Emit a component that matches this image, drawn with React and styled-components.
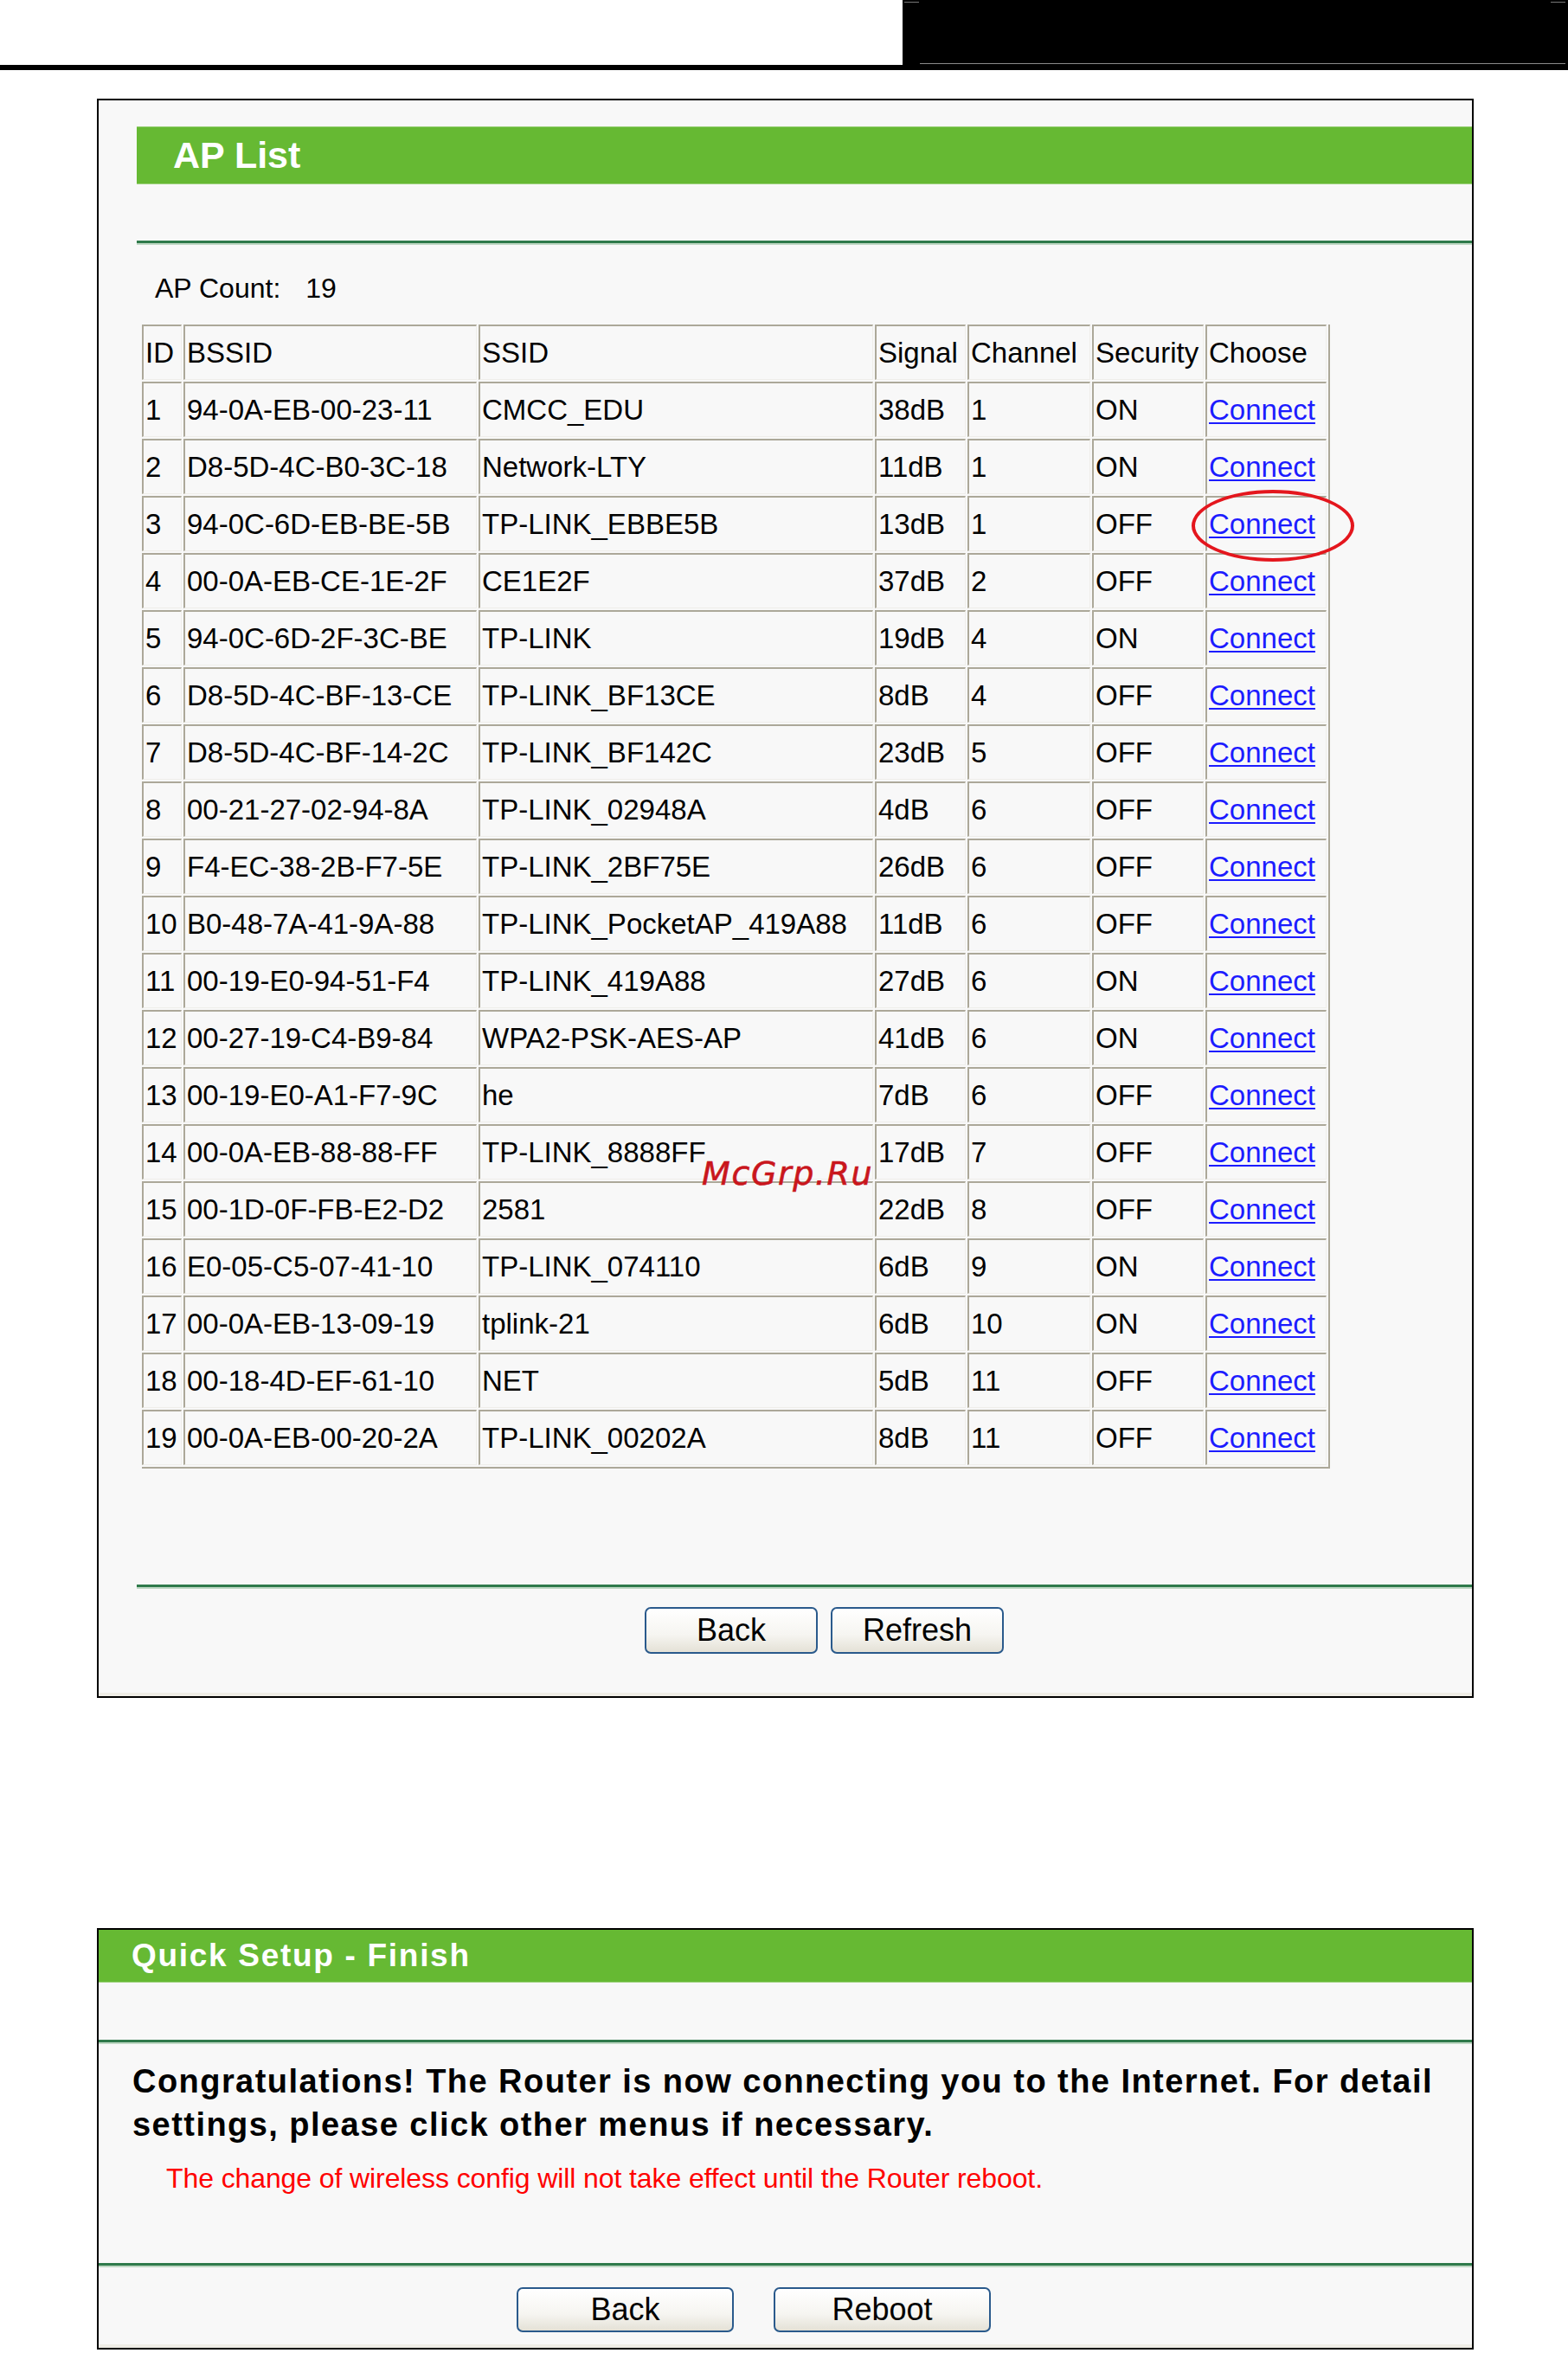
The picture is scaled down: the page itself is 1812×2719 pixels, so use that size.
import React from 'react';
import styled, { createGlobalStyle } from 'styled-components';

const GlobalStyle = createGlobalStyle`
  html, body { margin: 0; padding: 0; background: #ffffff; }
  body { font-family: "Liberation Sans", Arial, sans-serif; color: #000; }
`;

const Page = styled.div`
  width: 1812px;
  padding-bottom: 4px;
`;

const TopBar = styled.div`
  display: flex;
  height: 75px;
  border-bottom: 6px solid #000;
`;

const TopSpacer = styled.div`
  flex: 1;
`;

const TopBlock = styled.div`
  box-sizing: border-box;
  width: 769px;
  background: #000;
  display: flex;
  flex-direction: column;
  justify-content: space-between;
  padding: 2px 3px 1px 2px;
`;

const TopTicks = styled.div`
  display: flex;
  justify-content: space-between;
`;

const Tick = styled.span`
  width: 17px;
  height: 1px;
  background: #777;
`;

const TopRule = styled.div`
  height: 1px;
  margin-left: 18px;
  background: #8a8a8a;
`;

const Panel = styled.section`
  box-sizing: border-box;
  width: 1591px;
  margin: ${(p) => p.$top}px 0 0 112px;
  border: 2px solid #000;
  background: #f8f8f8;
  box-shadow: inset 0 -4px 0 #efede6;
  padding-bottom: ${(p) => p.$bottom}px;
`;

const Header = styled.div`
  box-sizing: border-box;
  height: ${(p) => p.$h}px;
  margin: ${(p) => p.$mt}px 0 0 ${(p) => p.$ml}px;
  padding-left: ${(p) => p.$pl}px;
  background: #66b933;
  border-top: ${(p) => (p.$topEdge ? '1px solid #9ed27e' : 'none')};
  border-bottom: 1px solid #9ed27e;
  display: flex;
  align-items: center;
  color: #ffffff;
  font-weight: bold;
  font-size: ${(p) => p.$fs}px;
  letter-spacing: ${(p) => p.$ls || 0}px;
`;

const Divider = styled.div`
  height: 0;
  margin: ${(p) => p.$mt}px 0 0 ${(p) => p.$ml || 0}px;
  border-top: 3px solid #2f7a4b;
  border-bottom: 2px solid #bfd8c4;
`;

const CountRow = styled.div`
  height: 40px;
  margin: 30px 0 0 65px;
  display: flex;
  align-items: center;
  gap: 29px;
  font-size: 32px;
`;

const Grid = styled.div`
  position: relative;
  width: fit-content;
  margin: 22px 0 0 50px;
  display: grid;
  grid-template-columns: 46px 339px 456px 105px 142px 129px 140px;
  grid-auto-rows: 64px;
  gap: 2px;
  padding: 0 2px 2px 0;
  border-right: 2px solid #aca899;
  border-bottom: 2px solid #aca899;
  font-size: 33px;
`;

const Row = styled.div`
  display: contents;
`;

const Cell = styled.div`
  box-sizing: border-box;
  display: flex;
  align-items: center;
  padding-left: 2px;
  border-top: 2px solid #aca899;
  border-left: 2px solid #aca899;
  border-right: 1px solid #efeeea;
  border-bottom: 1px solid #efeeea;
  white-space: nowrap;
  overflow: hidden;
`;

const ConnectLink = styled.a`
  color: #1c1cff;
  text-decoration: underline;
  text-decoration-thickness: 2px;
  text-underline-offset: 3px;
  cursor: pointer;
`;

const Highlight = styled.span`
  position: absolute;
  left: 1213px;
  top: 191px;
  width: 188px;
  height: 83px;
  box-sizing: border-box;
  border: 4px solid #e4161d;
  border-radius: 50%;
  pointer-events: none;
`;

const Watermark = styled.span`
  position: absolute;
  left: 647px;
  top: 962px;
  font-family: "DejaVu Sans", sans-serif;
  font-style: italic;
  font-size: 38px;
  line-height: 1;
  letter-spacing: 1.6px;
  color: #c9161d;
  -webkit-text-stroke: 0.6px #c9161d;
  pointer-events: none;
`;

const ButtonRow = styled.div`
  display: flex;
  gap: ${(p) => p.$gap}px;
  margin: ${(p) => p.$mt}px 0 0 ${(p) => p.$pl}px;
`;

const Button = styled.button`
  box-sizing: border-box;
  width: ${(p) => p.$w}px;
  height: ${(p) => p.$h}px;
  padding: 0;
  border: 2px solid #2a5a8c;
  border-radius: 7px;
  background: linear-gradient(#ffffff, #f6f5f1 60%, #e4e1d6);
  font-family: "Liberation Sans", Arial, sans-serif;
  font-size: 36px;
  color: #000;
`;

const Message = styled.p`
  max-width: 1540px;
  margin: 18px 0 0 39px;
  font-weight: bold;
  font-size: 38px;
  letter-spacing: 1.45px;
  line-height: 50px;
`;

const Note = styled.p`
  margin: 17px 0 0 78px;
  color: #ff0000;
  font-size: 32px;
  letter-spacing: -0.1px;
  line-height: 40px;
`;

const columns = ['ID', 'BSSID', 'SSID', 'Signal', 'Channel', 'Security', 'Choose'];

const aps = [
  ['1', '94-0A-EB-00-23-11', 'CMCC_EDU', '38dB', '1', 'ON'],
  ['2', 'D8-5D-4C-B0-3C-18', 'Network-LTY', '11dB', '1', 'ON'],
  ['3', '94-0C-6D-EB-BE-5B', 'TP-LINK_EBBE5B', '13dB', '1', 'OFF'],
  ['4', '00-0A-EB-CE-1E-2F', 'CE1E2F', '37dB', '2', 'OFF'],
  ['5', '94-0C-6D-2F-3C-BE', 'TP-LINK', '19dB', '4', 'ON'],
  ['6', 'D8-5D-4C-BF-13-CE', 'TP-LINK_BF13CE', '8dB', '4', 'OFF'],
  ['7', 'D8-5D-4C-BF-14-2C', 'TP-LINK_BF142C', '23dB', '5', 'OFF'],
  ['8', '00-21-27-02-94-8A', 'TP-LINK_02948A', '4dB', '6', 'OFF'],
  ['9', 'F4-EC-38-2B-F7-5E', 'TP-LINK_2BF75E', '26dB', '6', 'OFF'],
  ['10', 'B0-48-7A-41-9A-88', 'TP-LINK_PocketAP_419A88', '11dB', '6', 'OFF'],
  ['11', '00-19-E0-94-51-F4', 'TP-LINK_419A88', '27dB', '6', 'ON'],
  ['12', '00-27-19-C4-B9-84', 'WPA2-PSK-AES-AP', '41dB', '6', 'ON'],
  ['13', '00-19-E0-A1-F7-9C', 'he', '7dB', '6', 'OFF'],
  ['14', '00-0A-EB-88-88-FF', 'TP-LINK_8888FF', '17dB', '7', 'OFF'],
  ['15', '00-1D-0F-FB-E2-D2', '2581', '22dB', '8', 'OFF'],
  ['16', 'E0-05-C5-07-41-10', 'TP-LINK_074110', '6dB', '9', 'ON'],
  ['17', '00-0A-EB-13-09-19', 'tplink-21', '6dB', '10', 'ON'],
  ['18', '00-18-4D-EF-61-10', 'NET', '5dB', '11', 'OFF'],
  ['19', '00-0A-EB-00-20-2A', 'TP-LINK_00202A', '8dB', '11', 'OFF'],
];

export default function App() {
  return (
    <Page>
      <GlobalStyle />
      <TopBar>
        <TopSpacer />
        <TopBlock>
          <TopTicks>
            <Tick />
            <Tick />
          </TopTicks>
          <TopRule />
        </TopBlock>
      </TopBar>

      <Panel $top={33} $bottom={49}>
        <Header $h={67} $mt={30} $ml={44} $pl={42} $fs={43} $topEdge>
          AP List
        </Header>
        <Divider $mt={65} $ml={44} />
        <CountRow>
          <span>AP Count:</span>
          <span>19</span>
        </CountRow>
        <Grid>
          <Row>
            {columns.map((c) => (
              <Cell key={c}>{c}</Cell>
            ))}
          </Row>
          {aps.map((ap) => (
            <Row key={ap[0]}>
              {ap.map((v, i) => (
                <Cell key={i}>{v}</Cell>
              ))}
              <Cell>
                <ConnectLink>Connect</ConnectLink>
              </Cell>
            </Row>
          ))}
          <Highlight />
          <Watermark>McGrp.Ru</Watermark>
        </Grid>
        <Divider $mt={134} $ml={44} />
        <ButtonRow $gap={15} $mt={21} $pl={631}>
          <Button $w={200} $h={54}>Back</Button>
          <Button $w={200} $h={54}>Refresh</Button>
        </ButtonRow>
      </Panel>

      <Panel $top={266} $bottom={18}>
        <Header $h={61} $mt={0} $ml={0} $pl={38} $fs={37} $ls={1.7}>
          Quick Setup - Finish
        </Header>
        <Divider $mt={66} />
        <Message>
          Congratulations! The Router is now connecting you to the Internet. For detail settings, please click other menus if necessary.
        </Message>
        <Note>The change of wireless config will not take effect until the Router reboot.</Note>
        <Divider $mt={78} />
        <ButtonRow $gap={46} $mt={23} $pl={483}>
          <Button $w={251} $h={52}>Back</Button>
          <Button $w={251} $h={52}>Reboot</Button>
        </ButtonRow>
      </Panel>
    </Page>
  );
}
